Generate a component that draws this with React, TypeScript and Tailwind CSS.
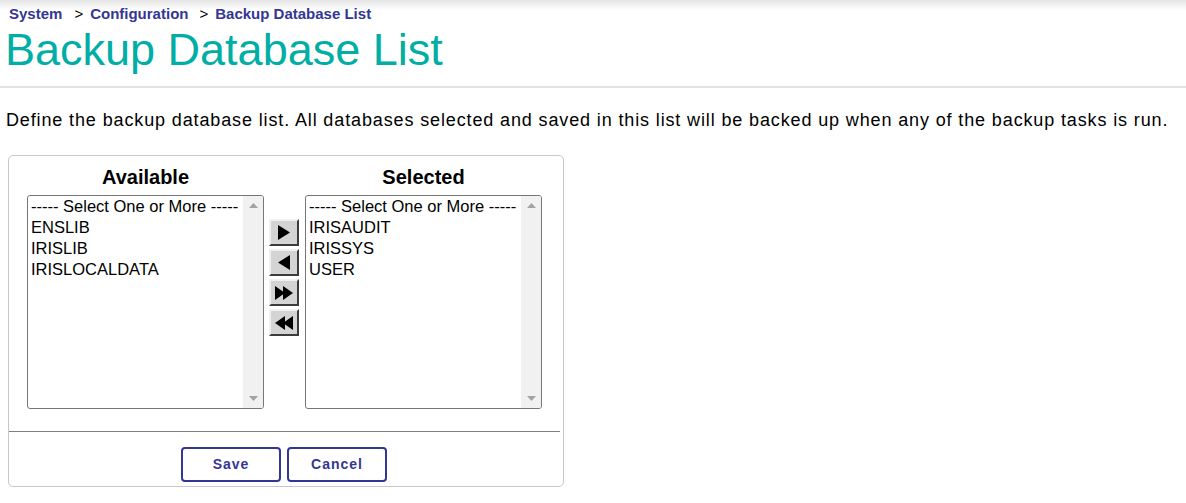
import React from 'react';

const available = ['ENSLIB', 'IRISLIB', 'IRISLOCALDATA'];
const selected = ['IRISAUDIT', 'IRISSYS', 'USER'];

function ListBox({ items }: { items: string[] }) {
  return (
    <div className="flex h-[214px] w-[237px] overflow-hidden rounded-[3px] border border-[#767676] bg-white">
      <div className="flex-1 pl-[3px] pt-[0px] text-[16.5px] leading-[21px] text-black">
        <div className="whitespace-nowrap">----- Select One or More -----</div>
        {items.map((item) => (
          <div key={item}>{item}</div>
        ))}
      </div>
      {/* fake scrollbar */}
      <div className="flex w-[20px] flex-col items-center justify-between bg-[#f1f1f1] py-[7px]">
        <svg width="9" height="5" viewBox="0 0 9 5">
          <polygon points="0,5 4.5,0 9,5" fill="#a3a3a3" />
        </svg>
        <svg width="9" height="5" viewBox="0 0 9 5">
          <polygon points="0,0 9,0 4.5,5" fill="#a3a3a3" />
        </svg>
      </div>
    </div>
  );
}

function MoveButton({ kind }: { kind: 'right' | 'left' | 'allRight' | 'allLeft' }) {
  return (
    <button className="flex h-[27px] w-[30px] items-center justify-center border-2 border-t-[#f0f0f0] border-l-[#f0f0f0] border-r-[#3c3c3c] border-b-[#3c3c3c] bg-[#d4d4d4]">
      {kind === 'right' && (
        <svg width="12" height="15" viewBox="0 0 12 15">
          <polygon points="0,0 12,7.5 0,15" fill="#000" />
        </svg>
      )}
      {kind === 'left' && (
        <svg width="12" height="15" viewBox="0 0 12 15">
          <polygon points="12,0 0,7.5 12,15" fill="#000" />
        </svg>
      )}
      {kind === 'allRight' && (
        <svg width="18" height="14" viewBox="0 0 18 14">
          <polygon points="0,0 10,7 0,14" fill="#000" />
          <polygon points="8,0 18,7 8,14" fill="#000" />
        </svg>
      )}
      {kind === 'allLeft' && (
        <svg width="18" height="14" viewBox="0 0 18 14">
          <polygon points="10,0 0,7 10,14" fill="#000" />
          <polygon points="18,0 8,7 18,14" fill="#000" />
        </svg>
      )}
    </button>
  );
}

export default function App() {
  return (
    <div className="min-h-[503px] bg-white font-['Liberation_Sans',Arial,sans-serif] text-black">
      {/* Header */}
      <div className="border-b-2 border-[#e2e2e2] bg-[linear-gradient(#e4e4e4,#ffffff_10px)] pb-[9px] pl-[5px] pt-[5px]">
        <div className="flex items-center pl-[4px] text-[15px] font-bold leading-[18px] text-[#333695]">
          <span>System</span>
          <span className="pl-[12px] pr-[7px] font-normal text-black">&gt;</span>
          <span>Configuration</span>
          <span className="pl-[11px] pr-[7px] font-normal text-black">&gt;</span>
          <span>Backup Database List</span>
        </div>
        <h1 className="text-[45px] leading-[54px] text-[#00aea5]">Backup Database List</h1>
      </div>

      <p className="pl-[6px] pt-[22px] text-[18px] leading-[21px] tracking-[0.87px]">
        Define the backup database list. All databases selected and saved in this list will be backed up when any of the backup tasks is run.
      </p>

      {/* Panel */}
      <div className="ml-[8px] mt-[24px] w-[556px] rounded-[5px] border border-[#c8c8c8] pb-[4px] pt-[9px]">
        <div className="flex pl-[18px]">
          <div className="flex flex-col">
            <div className="pb-[6px] text-center text-[20px] font-bold leading-[24px]">Available</div>
            <ListBox items={available} />
          </div>
          <div className="ml-[5px] mr-[6px] flex flex-col gap-[3px] pt-[54px]">
            <MoveButton kind="right" />
            <MoveButton kind="left" />
            <MoveButton kind="allRight" />
            <MoveButton kind="allLeft" />
          </div>
          <div className="flex flex-col">
            <div className="pb-[6px] text-center text-[20px] font-bold leading-[24px]">Selected</div>
            <ListBox items={selected} />
          </div>
        </div>

        <div className="mr-[3px] mt-[22px] border-t border-[#808080]" />

        <div className="mt-[15px] flex justify-center gap-[6px] pr-[4px]">
          <button className="h-[35px] w-[100px] rounded-[4px] border-2 border-[#333695] bg-white text-[14px] font-bold tracking-[1px] text-[#333695]">
            Save
          </button>
          <button className="h-[35px] w-[100px] rounded-[4px] border-2 border-[#333695] bg-white text-[14px] font-bold tracking-[1px] text-[#333695]">
            Cancel
          </button>
        </div>
      </div>
    </div>
  );
}
